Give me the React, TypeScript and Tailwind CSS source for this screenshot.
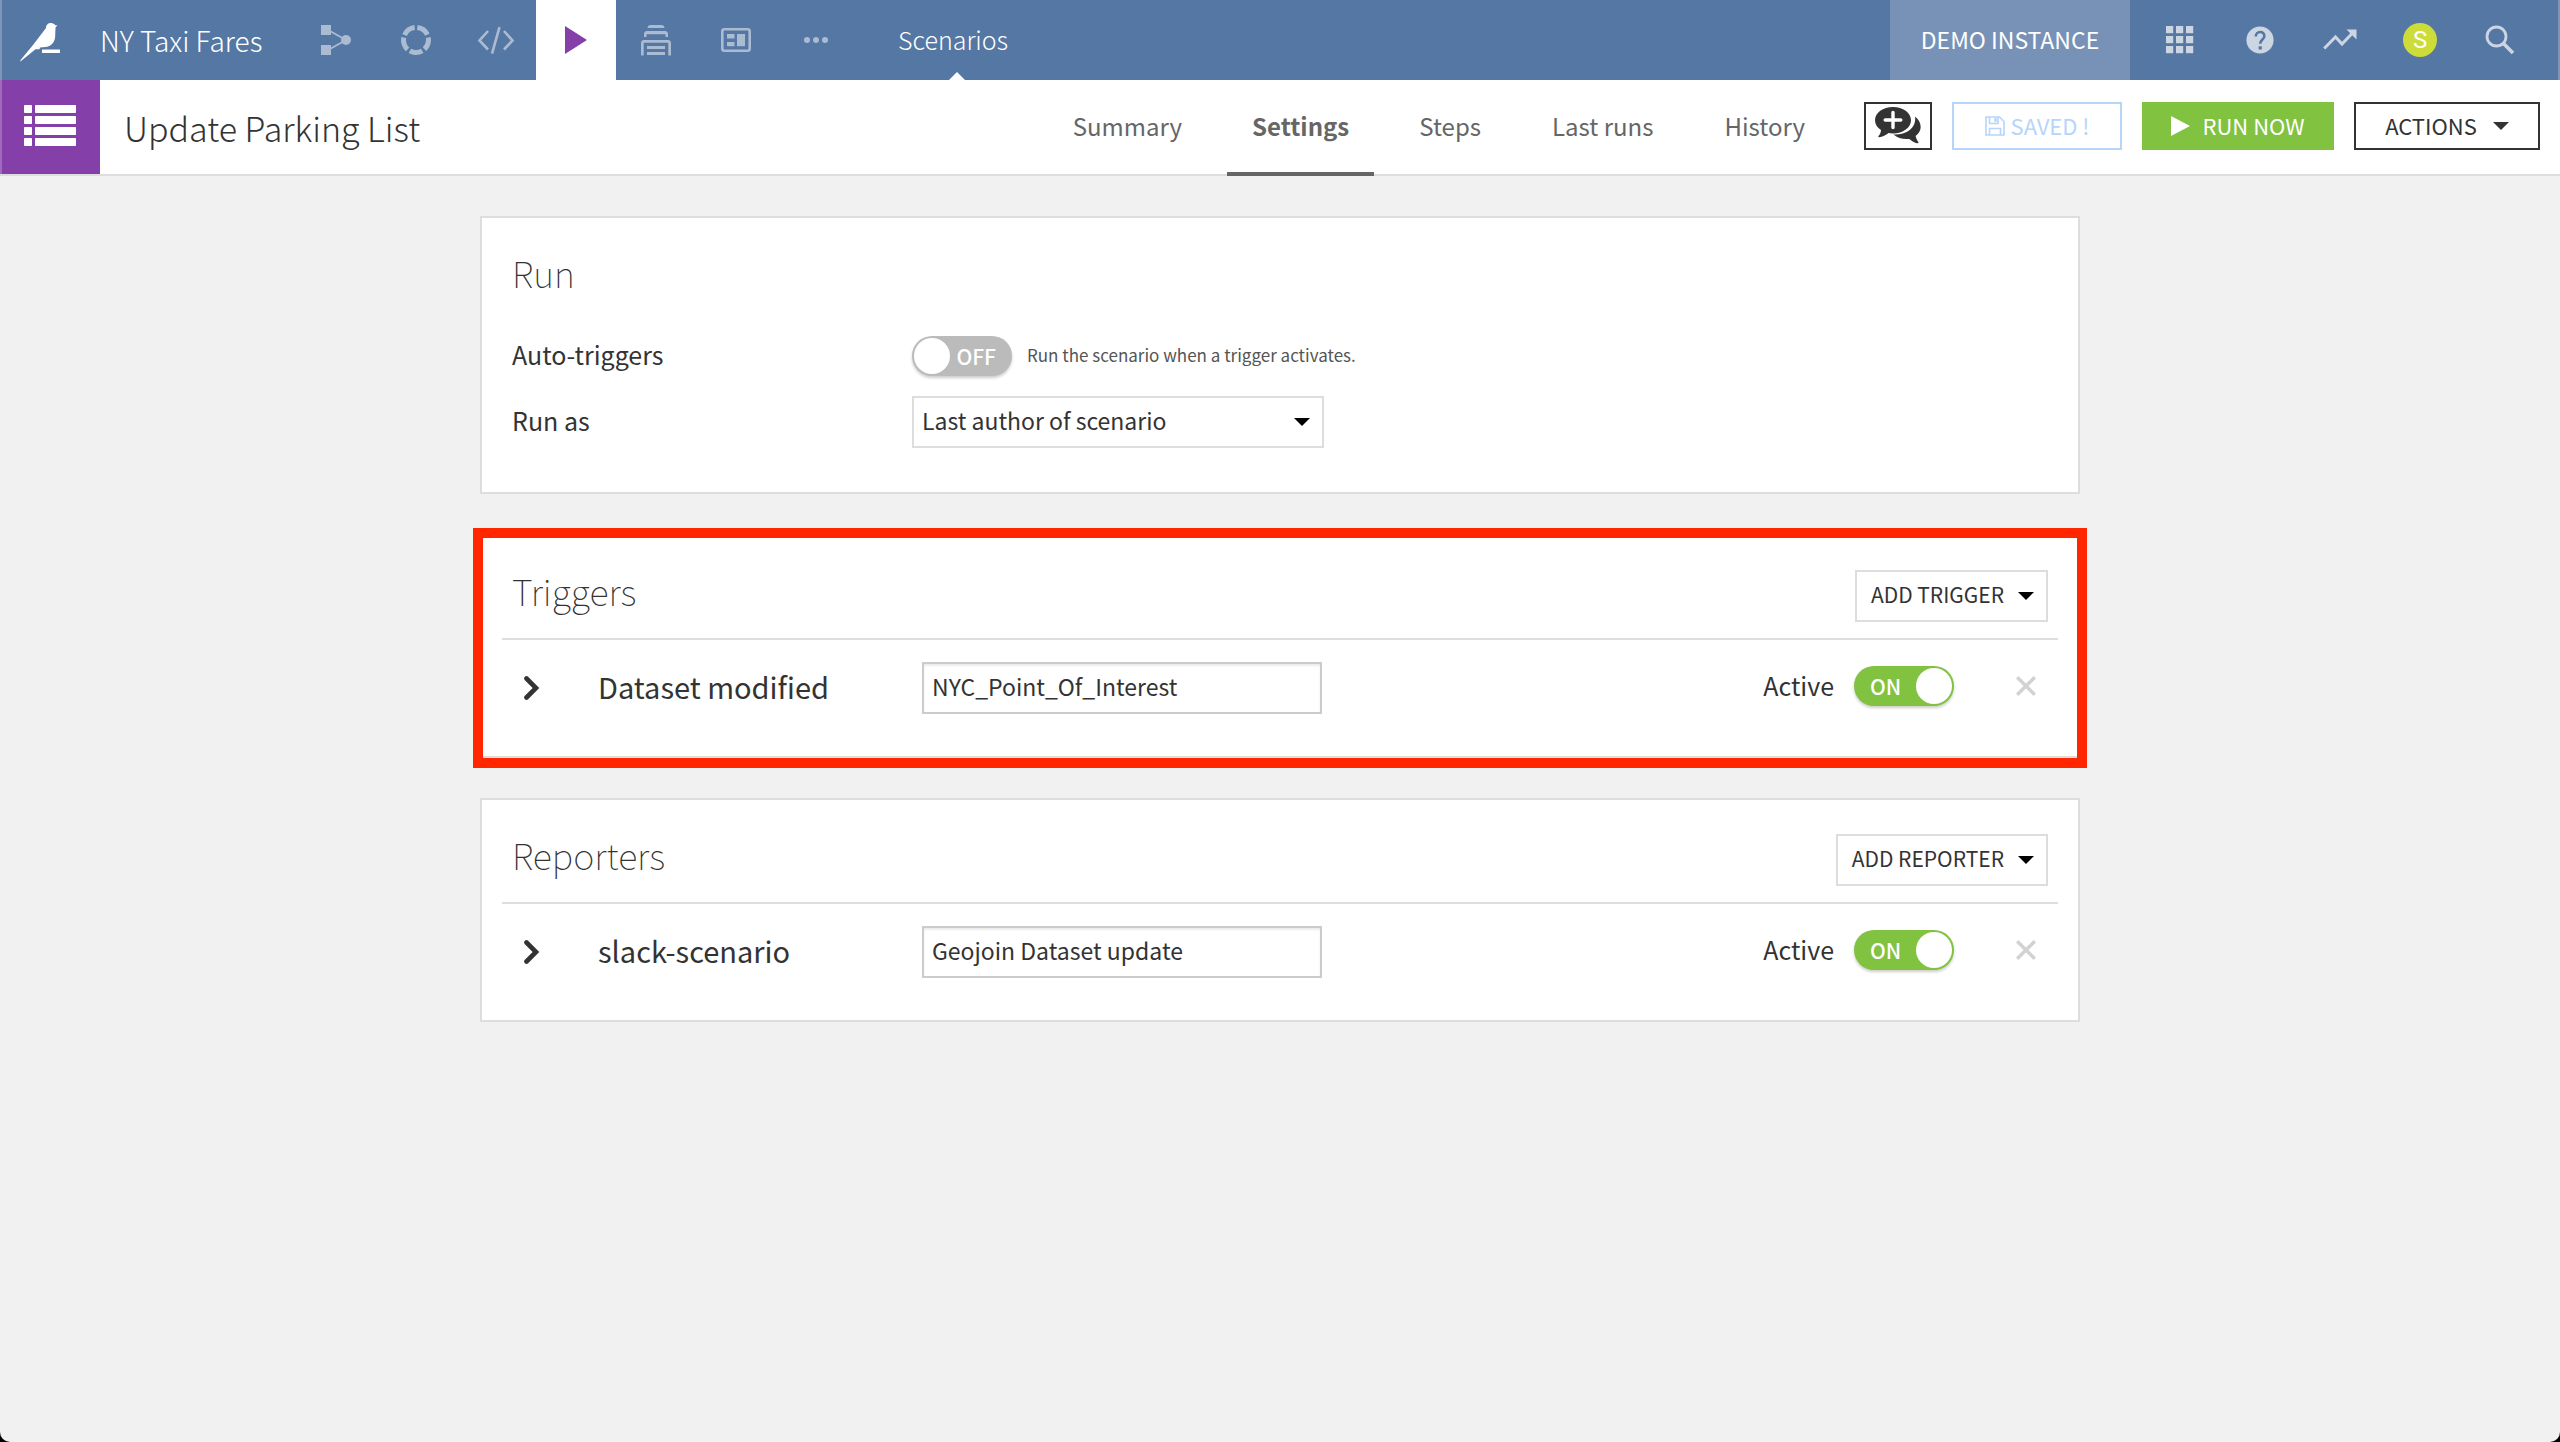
import React, { useState } from 'react';

const tabs = ['Summary', 'Settings', 'Steps', 'Last runs', 'History'];

// --- icons ---

const BirdLogo = () => (
  <svg width="40" height="40" viewBox="0 0 40 40" fill="#fff" aria-hidden="true">
    <path d="M26 5 C26 2 28 0 31 0 C33 0 34.5 1 35.2 2.2 L37.5 2.4 L35.6 4.2 C35.4 7 35.2 10 35.2 13 C35 19 31.5 23.5 25 24 C22.500 24.200 21 24.400 20 24.600 L19.500 26.200 L15.500 26.200 L0.400 38.500 C0.200 38 0.200 37.500 0.600 37 L13 22 Z" />
    <path d="M22 26.500 H40 V30 H22 Z" />
  </svg>
);

const FlowIcon = () => (
  <svg width="32" height="32" viewBox="0 0 32 32" fill="currentColor" aria-hidden="true">
    <rect x="1" y="1" width="10" height="10" />
    <rect x="1" y="21" width="10" height="10" />
    <circle cx="26" cy="16" r="5" />
    <path d="M9 6.500 L26 16 L9 25.500" fill="none" stroke="currentColor" strokeWidth="1.800" />
  </svg>
);

const RingIcon = () => (
  <svg width="32" height="32" viewBox="0 0 32 32" aria-hidden="true">
    <circle
      cx="16"
      cy="16"
      r="12.500"
      fill="none"
      stroke="currentColor"
      strokeWidth="5"
      pathLength="100"
      strokeDasharray="16.500 3.500"
      transform="rotate(-84 16 16)"
    />
  </svg>
);

const CodeIcon = () => (
  <svg width="38" height="32" viewBox="0 0 38 32" fill="none" stroke="currentColor" strokeWidth="2.600" aria-hidden="true">
    <path d="M11 7 L2.500 16.500 L11 25.500 M27 7 L35.500 16.500 L27 25.500 M22.500 3.200 L15 29.600" />
  </svg>
);

const PlayIcon = () => (
  <svg width="22" height="28" viewBox="0 0 22 28" fill="#843fa9" aria-hidden="true">
    <path d="M0 0 L22 14 L0 28 Z" />
  </svg>
);

const StackIcon = () => (
  <svg width="30" height="32" viewBox="0 0 30 32" fill="currentColor" aria-hidden="true">
    <path d="M6.500 4 C6.500 2.200 8 1 9.500 1 H20.500 C22 1 23.500 2.200 23.500 4 Z" />
    <path d="M3 13 V10 C3 8.300 4.300 7 6 7 H24 C25.700 7 27 8.300 27 10 V13 H24.500 V10.200 H5.500 V13 Z" />
    <path d="M0 31.500 V19 C0 17.300 1.300 16 3 16 H27 C28.700 16 30 17.300 30 19 V31.500 H27.300 V18.800 H2.700 V31.500 Z" />
    <rect x="6" y="22" width="18" height="3" />
    <rect x="6" y="28" width="18" height="3" />
  </svg>
);

const DashboardIcon = () => (
  <svg width="30" height="24" viewBox="0 0 30 24" fill="currentColor" aria-hidden="true">
    <rect x="1.300" y="1.300" width="27.400" height="21.400" rx="2" fill="none" stroke="currentColor" strokeWidth="2.600" />
    <rect x="6" y="6" width="7.500" height="4.500" />
    <rect x="6" y="14" width="7.500" height="4.200" />
    <rect x="16" y="6" width="8" height="12.200" />
  </svg>
);

const DotsIcon = () => (
  <svg width="24" height="6" viewBox="0 0 24 6" fill="currentColor" aria-hidden="true">
    <circle cx="3" cy="3" r="3" />
    <circle cx="12" cy="3" r="3" />
    <circle cx="21" cy="3" r="3" />
  </svg>
);

const GridIcon = () => (
  <svg width="28" height="28" viewBox="0 0 28 28" fill="currentColor" aria-hidden="true">
    {[0, 10, 20].map((y) => [0, 10, 20].map((x) => <rect key={x + '-' + y} x={x} y={y} width="7.200" height="7.200" />))}
  </svg>
);

const HelpIcon = () => (
  <svg width="28" height="28" viewBox="0 0 28 28" aria-hidden="true">
    <circle cx="14" cy="14" r="13.600" fill="currentColor" />
    <path d="M9.800 10.500 C9.800 4.600 18.400 4.600 18.400 10 C18.400 13.500 14.200 13.600 14.200 17.800" fill="none" stroke="#5577a4" strokeWidth="2.600" />
    <rect x="12.600" y="20.300" width="3.200" height="3.200" fill="#5577a4" />
  </svg>
);

const TrendIcon = () => (
  <svg width="34" height="22" viewBox="0 0 34 22" fill="none" aria-hidden="true">
    <path d="M1.200 19.500 L12.500 8 L19 15 L30 3.500" stroke="currentColor" strokeWidth="3" />
    <path d="M23.500 0.500 H33.500 V10.500 Z" fill="currentColor" />
  </svg>
);

const SearchIcon = () => (
  <svg width="30" height="30" viewBox="0 0 30 30" fill="none" stroke="currentColor" aria-hidden="true">
    <circle cx="11.500" cy="11.500" r="9.500" strokeWidth="2.800" />
    <path d="M18.500 18.500 L28 28" strokeWidth="3.600" />
  </svg>
);

const ListIcon = () => (
  <svg width="52" height="42" viewBox="0 0 52 42" fill="#fff" aria-hidden="true">
    {[0, 11, 22, 33].map((y) => (
      <g key={y}>
        <rect y={y} width="8" height="8" rx="0.800" />
        <rect x="11" y={y} width="41" height="8" rx="0.800" />
      </g>
    ))}
  </svg>
);

const CommentsIcon = () => (
  <svg width="46" height="38" viewBox="0 0 46 38" fill="#333" aria-hidden="true">
    <path d="M40 9.500 C44.500 13 46.500 18 45.300 22.500 C44.600 25 43 27.200 40.600 28.900 C41.200 31.500 42.500 34 43.700 35.500 C43 36.500 42 36.300 41 35.900 C38.500 35 36 33.300 34.200 31.900 C28.500 32.600 22.500 31 18.500 27.500 C28 28.300 37.500 23.500 39.600 16 C40.300 13.600 40.400 11.400 40 9.500 Z" />
    <path d="M18 0 C28 0 36 5.800 36 13.200 C36 20.600 28 26.400 18 26.400 C16.500 26.400 15 26.200 13.500 26 C11 28 7.500 29.900 4 30.300 C3.300 30.300 3 29.700 3.500 29.100 C5 27.500 5.800 25.500 6 23 C2.200 20.600 0 17.100 0 13.200 C0 5.800 8 0 18 0 Z" />
    <path d="M18 5.500 V20.500 M10.200 13 H25.800" stroke="#fff" strokeWidth="3.400" strokeLinecap="round" />
  </svg>
);

const SaveIcon = () => (
  <svg width="20" height="20" viewBox="0 0 20 20" fill="none" stroke="currentColor" strokeWidth="1.600" aria-hidden="true">
    <path d="M1 1 H14.500 L19 5.500 V19 H1 Z" />
    <path d="M4.500 1 V7.500 H13 V1 M4.500 19 V12.500 H15.500 V19" />
    <path d="M10.500 2 V6" strokeWidth="2.400" />
  </svg>
);

const Caret = ({ color = '#000' }: { color?: string }) => (
  <svg width="16" height="8" viewBox="0 0 16 8" fill={color} aria-hidden="true">
    <path d="M0 0 H16 L8 8 Z" />
  </svg>
);

const ChevronIcon = () => (
  <svg width="18" height="24" viewBox="0 0 18 24" fill="none" stroke="#333" strokeWidth="4.600" strokeLinecap="round" aria-hidden="true">
    <path d="M4.500 2.500 L14 12 L4.500 21.500" strokeLinejoin="miter" />
  </svg>
);

const CloseIcon = () => (
  <svg width="20" height="20" viewBox="0 0 20 20" fill="none" stroke="#d2d2d2" strokeWidth="3.400" aria-hidden="true">
    <path d="M1.200 1.200 L18.800 18.800 M18.800 1.200 L1.200 18.800" />
  </svg>
);

const navItems = [
  { name: 'Flow', icon: <FlowIcon /> },
  { name: 'Analyses', icon: <RingIcon /> },
  { name: 'Code', icon: <CodeIcon /> },
  { name: 'Jobs', icon: <PlayIcon />, active: true },
  { name: 'Wiki', icon: <StackIcon /> },
  { name: 'Dashboards', icon: <DashboardIcon /> },
  { name: 'More', icon: <DotsIcon /> },
];

const toolItems = [
  { name: 'Applications', icon: <GridIcon /> },
  { name: 'Help', icon: <HelpIcon /> },
  { name: 'Activity', icon: <TrendIcon /> },
  {
    name: 'Profile',
    icon: (
      <span className="flex h-[34px] w-[34px] items-center justify-center rounded-full bg-[#cddc39] font-['Roboto',sans-serif] text-[24px] leading-none text-white">
        S
      </span>
    ),
  },
  { name: 'Search', icon: <SearchIcon /> },
];

// --- shared parts ---

const Toggle = ({ id, initial }: { id: string; initial: boolean }) => {
  const [on, setOn] = useState(initial);

  return (
    <label
      htmlFor={id}
      className={`relative flex h-10 w-[100px] shrink-0 cursor-pointer items-center justify-between rounded-full p-[2px] text-[21px] font-medium leading-none text-white shadow-[0_2px_3px_rgba(0,0,0,0.2)] ${on ? 'bg-[#81c241]' : 'flex-row-reverse bg-[#bbb]'}`}
    >
      <input id={id} type="checkbox" className="sr-only" checked={on} onChange={(e) => setOn(e.target.checked)} />
      <span className={on ? 'pl-[14px]' : 'pr-[14px]'}>{on ? 'ON' : 'OFF'}</span>
      <span className="h-9 w-9 rounded-full bg-white" />
    </label>
  );
};

type ListCardProps = {
  title: string;
  action: string;
  itemName: string;
  itemValue: string;
  highlighted?: boolean;
};

const ListCard = ({ title, action, itemName, itemValue, highlighted }: ListCardProps) => {
  const [value, setValue] = useState(itemValue);

  return (
    <section className="relative border-2 border-[#ddd] bg-white px-5 pb-[42px]">
      <div className="flex h-[104px] items-end justify-between border-b-2 border-[#ddd] px-[10px] pb-4">
        <h2 className="pb-[6px] text-[36px] font-thin leading-[52px] text-[#333]">{title}</h2>
        <button type="button" className="flex h-[52px] items-center gap-[14px] border-2 border-[#ddd] pl-[14px] pr-3 text-[21px]">
          <span className="pb-[2px]">{action}</span>
          <Caret />
        </button>
      </div>

      <div className="mt-[22px] flex h-[52px] items-center pl-[20px] pr-[22px]">
        <button type="button" aria-label="Expand" className="w-[76px]">
          <ChevronIcon />
        </button>
        <label htmlFor={title + '-name'} className="w-[324px] pb-1 text-[29px] leading-[40px]">
          {itemName}
        </label>
        <input
          id={title + '-name'}
          type="text"
          value={value}
          onChange={(e) => setValue(e.target.value)}
          className="h-[52px] w-[400px] border-2 border-[#ccc] bg-white px-2 pb-1 text-[23px] shadow-[inset_0_2px_2px_rgba(0,0,0,0.08)] outline-none"
        />
        <div className="mb-1 ml-auto flex items-center gap-5">
          <label htmlFor={title + '-active'} className="pb-[2px] text-[25px] leading-[36px]">
            Active
          </label>
          <Toggle id={title + '-active'} initial={true} />
          <button type="button" aria-label="Remove" className="ml-[42px]">
            <CloseIcon />
          </button>
        </div>
      </div>

      {highlighted && (
        <div className="pointer-events-none absolute -left-[9px] -right-[9px] -top-2 -bottom-3 border-[10px] border-[#ff2600]" />
      )}
    </section>
  );
};

const App = () => {
  const [tab, setTab] = useState('Settings');

  return (
    <div className="bg-black font-['Noto_Sans_CJK_JP','Noto_Sans',sans-serif] text-[#333]">
      <div className="flex min-h-screen flex-col overflow-hidden rounded-b-[10px] bg-[#f1f1f1]">
        {/* top bar */}
        <header className="flex h-20 items-center border-x-2 border-[#7c97ba] bg-[#5577a4] text-white">
          <a href="#" aria-label="Home" className="ml-[18px] pt-[6px]">
            <BirdLogo />
          </a>
          <a href="#" className="ml-10 w-[196px] whitespace-nowrap text-[28px] font-light leading-[40px]">
            NY Taxi Fares
          </a>
          <nav className="flex h-full">
            {navItems.map((item) => (
              <a
                key={item.name}
                href="#"
                aria-label={item.name}
                className={`flex h-full w-20 items-center justify-center ${item.active ? 'bg-white' : 'text-[#abbbd1]'}`}
              >
                {item.icon}
              </a>
            ))}
          </nav>
          <a href="#" className="relative ml-[41px] flex h-full items-center px-px text-[25px] font-light">
            Scenarios
            <svg width="16" height="8" viewBox="0 0 16 8" fill="#fff" aria-hidden="true" className="absolute bottom-0 left-1/2 -ml-1">
              <path d="M0 8 L8 0 L16 8 Z" />
            </svg>
          </a>
          <div className="ml-auto flex h-full items-center pr-[18px]">
            <span className="mr-[10px] flex h-full w-60 items-center justify-center bg-[#7792b6] pb-[2px] text-[23px]">DEMO INSTANCE</span>
            {toolItems.map((item) => (
              <button key={item.name} type="button" aria-label={item.name} className="flex h-full w-20 items-center justify-center text-[#ccd6e3]">
                {item.icon}
              </button>
            ))}
          </div>
        </header>

        {/* scenario bar */}
        <div className="flex h-24 items-center border-b-2 border-[#ddd] bg-white pr-5">
          <div className="flex h-full w-[100px] items-center justify-center border-l-2 border-[#a06bbf] bg-[#843fa9] pb-[2px] pr-[2px]">
            <ListIcon />
          </div>
          <h1 className="ml-6 pt-[2px] text-[34px] font-light leading-[50px]">Update Parking List</h1>
          <nav className="ml-auto mr-[33px] flex h-24 gap-[19px] self-start">
            {tabs.map((name) => (
              <button
                key={name}
                type="button"
                onClick={() => setTab(name)}
                className={`h-full border-b-4 text-[24px] text-[#666] ${name === tab ? 'border-[#666] px-[25px] font-bold' : 'border-transparent px-[26px]'}`}
              >
                {name}
              </button>
            ))}
          </nav>
          <div className="mb-[2px] flex gap-5 text-[22px]">
            <button type="button" aria-label="Discussions" className="flex h-12 w-[68px] items-center justify-center border-2 border-[#333]">
              <CommentsIcon />
            </button>
            <button type="button" className="flex h-12 w-[170px] items-center justify-center gap-[6px] border-2 border-[#b5d5fb] text-[#b5d5fb]">
              <SaveIcon />
              <span className="pb-[2px]">SAVED !</span>
            </button>
            <button type="button" className="flex h-12 w-48 items-center justify-center gap-3 bg-[#81c241] text-white">
              <svg width="19" height="20" viewBox="0 0 19 20" fill="#fff" aria-hidden="true">
                <path d="M0 0 L19 10 L0 20 Z" />
              </svg>
              <span className="pb-[2px]">RUN NOW</span>
            </button>
            <button type="button" className="flex h-12 w-[186px] items-center justify-center gap-4 border-2 border-[#333]">
              <span className="pb-[2px]">ACTIONS</span>
              <Caret color="#333" />
            </button>
          </div>
        </div>

        <main className="mx-auto mt-10 flex w-full max-w-[1600px] flex-col gap-10 pb-10">
          <section className="border-2 border-[#ddd] bg-white px-[30px] pb-11">
            <h2 className="mt-[28px] text-[36px] font-thin leading-[52px] text-[#333]">Run</h2>
            <div className="mt-8 flex h-[52px] items-center">
              <label htmlFor="auto-triggers" className="w-[400px] pb-1 text-[25px] leading-[36px]">
                Auto-triggers
              </label>
              <Toggle id="auto-triggers" initial={false} />
              <span className="ml-[15px] pb-[2px] text-[17px] leading-[26px] text-[#555]">Run the scenario when a trigger activates.</span>
            </div>
            <div className="mt-[14px] flex h-[52px] items-center">
              <label htmlFor="run-as" className="w-[400px] pb-1 text-[25px] leading-[36px]">
                Run as
              </label>
              <div className="relative h-[52px] w-[412px]">
                <select id="run-as" className="h-full w-full appearance-none border-2 border-[#ddd] bg-white px-2 pb-1 text-[23px] outline-none">
                  <option>Last author of scenario</option>
                </select>
                <div className="pointer-events-none absolute right-[14px] top-[22px]">
                  <Caret />
                </div>
              </div>
            </div>
          </section>

          <ListCard title="Triggers" action="ADD TRIGGER" itemName="Dataset modified" itemValue="NYC_Point_Of_Interest" highlighted />
          <ListCard title="Reporters" action="ADD REPORTER" itemName="slack-scenario" itemValue="Geojoin Dataset update" />
        </main>
      </div>
    </div>
  );
};

export default App;
